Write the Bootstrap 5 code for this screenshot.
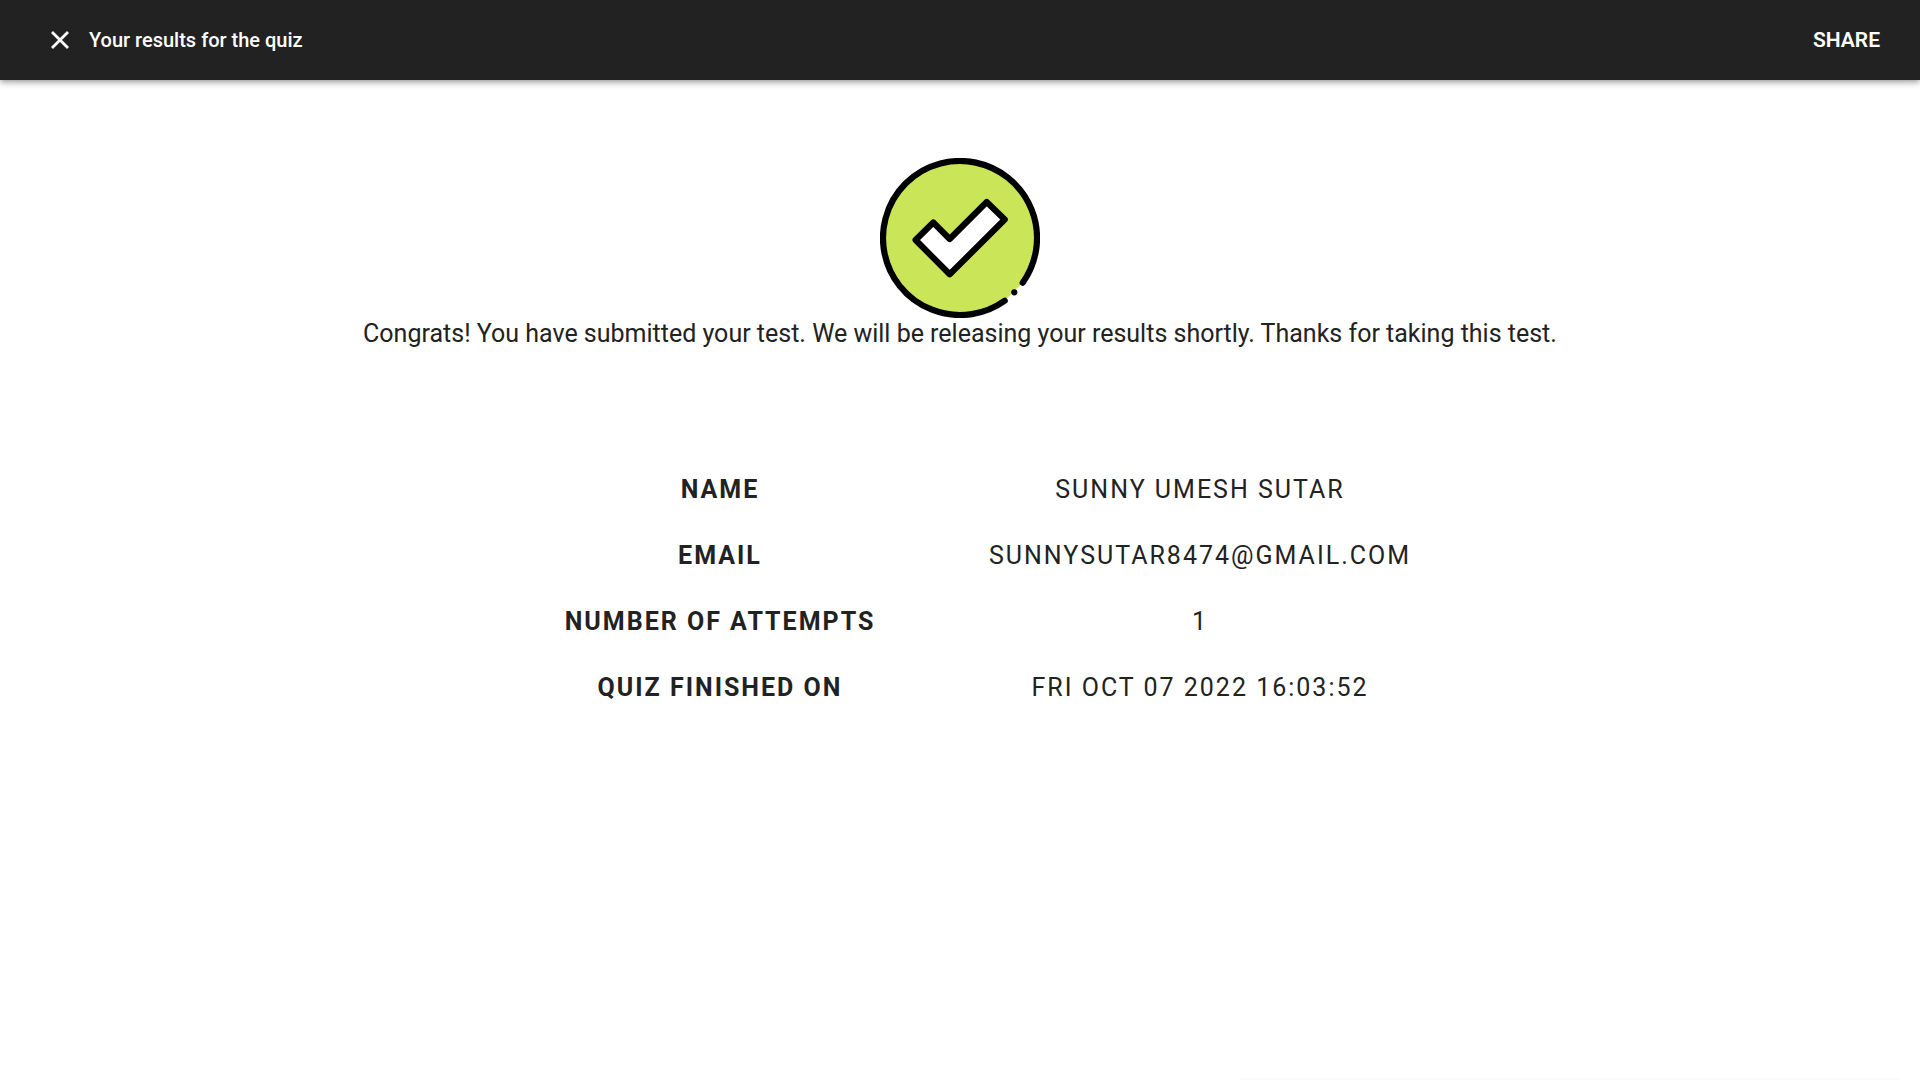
<!DOCTYPE html>
<html lang="en">
<head>
<meta charset="utf-8">
<meta name="viewport" content="width=device-width, initial-scale=1">
<title>Your results for the quiz</title>
<link href="https://cdn.jsdelivr.net/npm/bootstrap@5.3.0/dist/css/bootstrap.min.css" rel="stylesheet">
<style>
  body { font-family: Roboto, "Liberation Sans", sans-serif; color: #222; background: #fff; }
  .topbar { min-height: 80px; background: #222; box-shadow: 0 2px 4px -1px rgba(0,0,0,.2), 0 4px 5px 0 rgba(0,0,0,.14), 0 1px 10px 0 rgba(0,0,0,.12); padding: 0 40px 0 48px; gap: 17px; }
  .topbar h1, .share-btn { line-height: 24px; color: #fff; }
  .topbar h1 { font-size: 20px; font-weight: 500; }
  .share-btn { font-size: 21px; font-weight: 600; }
  .close-btn svg, .done-icon { display: block; }
  .results { padding-top: 78px; }
  .message { font-size: 25px; line-height: 32px; font-weight: 400; }
  .details { max-width: 960px; margin-top: 107px; font-size: 25px; line-height: 26px; letter-spacing: 2px; }
  .details th, .details td { width: 50%; padding: 20px 0; text-transform: uppercase; text-align: center; }
  .details th { font-weight: 700; }
  .details td { font-weight: 400; }
  .toast-edge { height: 2px; width: 660px; right: 20px; background: #fafafa; }
</style>
<script src="https://cdn.jsdelivr.net/npm/bootstrap@5.3.0/dist/js/bootstrap.bundle.min.js" defer></script>
</head>
<body>
<header class="topbar d-flex align-items-center position-relative">
  <button type="button" class="close-btn btn p-0 border-0" aria-label="Close">
    <svg width="24" height="24" viewBox="0 0 24 24" aria-hidden="true"><path d="M4 4 20 20M20 4 4 20" fill="none" stroke="#fff" stroke-width="2.8"/></svg>
  </button>
  <h1 class="mb-0">Your results for the quiz</h1>
  <button type="button" class="share-btn btn p-0 border-0 ms-auto">SHARE</button>
</header>
<main class="results">
  <svg class="done-icon mx-auto" width="160" height="160" viewBox="0 0 160 160" role="img" aria-label="Submitted">
    <path d="M142.7 124.7A77 77 0 1 0 124.7 142.7Z" fill="#cae558"/>
    <path d="M142.7 124.7A77 77 0 1 0 124.7 142.7" fill="none" stroke="#000" stroke-width="6.2" stroke-linecap="round"/>
    <circle cx="134.3" cy="134.3" r="3.1"/>
    <path d="M35.6 82 53.3 64.5 69.7 81 106.7 44 124.7 61.5 69.7 116.3Z" fill="#fff" stroke="#000" stroke-width="6.2" stroke-linejoin="round"/>
  </svg>
  <p class="message text-center mb-0">Congrats! You have submitted your test. We will be releasing your results shortly. Thanks for taking this test.</p>
  <table class="details w-100 mx-auto">
    <tbody>
      <tr><th scope="row">Name</th><td>Sunny Umesh Sutar</td></tr>
      <tr><th scope="row">Email</th><td>sunnysutar8474@gmail.com</td></tr>
      <tr><th scope="row">Number of attempts</th><td>1</td></tr>
      <tr><th scope="row">Quiz finished on</th><td>Fri Oct 07 2022 16:03:52</td></tr>
    </tbody>
  </table>
</main>
<div class="toast-edge position-fixed bottom-0" aria-hidden="true"></div>
</body>
</html>
